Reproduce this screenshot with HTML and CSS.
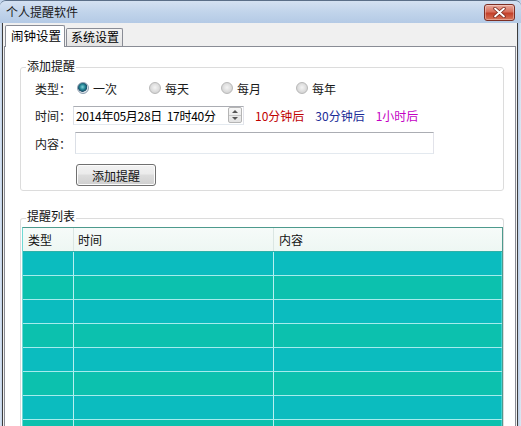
FILE: index.html
```html
<!DOCTYPE html>
<html lang="zh">
<head>
<meta charset="utf-8">
<title>个人提醒软件</title>
<link rel="stylesheet" href="styles.css">
</head>
<body>
<div class="window">
  <div class="titlebar">
    <span class="title">个人提醒软件</span>
    <span class="close"><svg width="13" height="11" viewBox="0 0 13 11"><path d="M2 1.5 L11 9.5 M11 1.5 L2 9.5" stroke="#7a2a1e" stroke-width="3.4" stroke-linecap="round"/><path d="M2 1.5 L11 9.5 M11 1.5 L2 9.5" stroke="#ffffff" stroke-width="1.8" stroke-linecap="round"/></svg></span>
  </div>
  <div class="client">
    <div class="tabs">
      <div class="tab active">闹钟设置</div>
      <div class="tab">系统设置</div>
    </div>
    <div class="panel">
      <div class="group add">
        <span class="legend">添加提醒</span>
        <div class="row r1">
          <span class="label">类型：</span>
          <div class="radios">
            <span class="opt"><span class="radio checked"></span>一次</span>
            <span class="opt"><span class="radio"></span>每天</span>
            <span class="opt"><span class="radio"></span>每月</span>
            <span class="opt"><span class="radio"></span>每年</span>
          </div>
        </div>
        <div class="row r2">
          <span class="label">时间：</span>
          <div class="datebox">
            <span class="datetext">2014年05月28日&nbsp; 17时40分</span>
            <span class="spin"><span class="up"></span><span class="down"></span></span>
          </div>
          <span class="quick red">10分钟后</span>
          <span class="quick navy">30分钟后</span>
          <span class="quick pink">1小时后</span>
        </div>
        <div class="row r3">
          <span class="label">内容：</span>
          <div class="textbox"></div>
        </div>
        <div class="row r4">
          <button class="btn">添加提醒</button>
        </div>
      </div>
      <div class="group list">
        <span class="legend">提醒列表</span>
        <div class="table">
          <div class="thead">
            <span class="th c1">类型</span>
            <span class="th c2">时间</span>
            <span class="th c3">内容</span>
          </div>
          <div class="trow a"><span class="td"></span><span class="td"></span><span class="td"></span></div>
          <div class="trow b"><span class="td"></span><span class="td"></span><span class="td"></span></div>
          <div class="trow a"><span class="td"></span><span class="td"></span><span class="td"></span></div>
          <div class="trow b"><span class="td"></span><span class="td"></span><span class="td"></span></div>
          <div class="trow a"><span class="td"></span><span class="td"></span><span class="td"></span></div>
          <div class="trow b"><span class="td"></span><span class="td"></span><span class="td"></span></div>
          <div class="trow a"><span class="td"></span><span class="td"></span><span class="td"></span></div>
          <div class="trow b"><span class="td"></span><span class="td"></span><span class="td"></span></div>
        </div>
      </div>
    </div>
  </div>
</div>
</body>
</html>
```
FILE: styles.css
```css
* { box-sizing: border-box; }
html, body { margin: 0; padding: 0; background: #c2d5ec; }
body {
  font-family: "Noto Sans CJK SC", "Liberation Sans", sans-serif;
  font-size: 12px;
  color: #000;
}
.window {
  width: 521px;
  height: 426px;
  display: flex;
  flex-direction: column;
  overflow: hidden;
  background: linear-gradient(90deg, #dfe8f3 0, #b9cde6 2px, #b9cde6 518px, #dfe8f3 521px);
  border-radius: 6px 6px 0 0;
  border-top: 1px solid #5b6f88;
}
.titlebar {
  flex: none;
  height: 22px;
  display: flex;
  align-items: center;
  padding: 0 6px 0 6px;
  background: linear-gradient(#d4e1f1 0, #c1d4eb 50%, #b4cae5 100%);
  border-radius: 6px 6px 0 0;
}
.title { line-height: 16px; color: #1a1a1a; }
.close {
  margin-left: auto;
  width: 31px;
  height: 17px;
  margin-top: 1px;
  display: flex;
  align-items: center;
  justify-content: center;
  border: 1px solid #7c2e24;
  border-radius: 3px;
  background: linear-gradient(#eaa99c 0, #d7705d 45%, #c3402a 55%, #d8755a 100%);
  box-shadow: inset 0 0 0 1px rgba(255,255,255,0.35);
}
.client {
  flex: 1;
  margin: 0 3px 0 2px;
  border-left: 1px solid #3d3d3d;
  border-right: 1px solid #3d3d3d;
  background: #f0f0f0;
  display: flex;
  flex-direction: column;
  min-height: 0;
}
.tabs {
  flex: none;
  height: 23px;
  display: flex;
  align-items: flex-end;
  padding-left: 2px;
  position: relative;
  z-index: 1;
}
.tab {
  height: 18px;
  width: 57px;
  margin-left: 1px;
  border: 1px solid #898c95;
  border-bottom: none;
  border-radius: 2px 2px 0 0;
  background: linear-gradient(#f3f3f3, #e4e4e4);
  line-height: 16px;
  padding-left: 4px;
  white-space: nowrap;
}
.tab.active {
  margin-left: 0;
  width: 60px;
  height: 22px;
  margin-bottom: -1px;
  background: #fff;
  padding-left: 5px;
  line-height: 19px;
  font-size: 12.5px;
}
.panel {
  flex: 1;
  min-height: 0;
  margin: 0 1px;
  background: #fff;
  border: 1px solid #898c95;
  border-bottom: none;
  display: flex;
  flex-direction: column;
  overflow: hidden;
}
.group {
  position: relative;
  width: 484px;
  margin-left: 15px;
  border: 1px solid #dcdcdc;
  border-radius: 3px;
  box-shadow: inset 1px 1px 0 #fff;
}
.legend {
  position: absolute;
  top: -10px;
  left: 5px;
  padding: 0 1px;
  background: #fff;
  line-height: 16px;
  color: #111;
}
.group.add {
  margin-top: 20px;
  height: 124px;
  padding: 9px 0 0 14px;
  flex: none;
}
.row {
  display: flex;
  align-items: center;
  height: 22px;
}
.r2 { margin-top: 5px; }
.r3 { margin-top: 6px; }
.r4 { margin-top: 10px; }
.label {
  width: 38px;
  flex: none;
  color: #1a1a1a;
}
.radios {
  display: flex;
  margin-left: 4px;
}
.opt {
  display: flex;
  align-items: center;
  width: 72px;
  color: #1a1a1a;
}
.opt:nth-child(3) { width: 75px; }
.radio {
  width: 12px;
  height: 12px;
  border-radius: 50%;
  border: 1px solid #b8b8b8;
  background: radial-gradient(circle at 50% 45%, #f4f4f4 0, #dadada 60%, #c8c8c8 100%);
  margin-right: 4px;
  flex: none;
}
.radio.checked {
  border-color: #8e9fb0;
  background: radial-gradient(circle at 45% 40%, #7fd3da 0, #1f7f8f 35%, #1c4d68 55%, #dfe6ec 62%, #c9d3dc 100%);
}
.datebox {
  width: 171px;
  height: 19px;
  border: 1px solid #abadb3;
  border-color: #abadb3 #e2e3ea #e3e9ef #dbdfe6;
  display: flex;
  align-items: center;
  padding-left: 2px;
}
.datetext {
  flex: 1;
  white-space: nowrap;
  letter-spacing: -0.3px;
}
.spin {
  width: 14px;
  height: 16px;
  margin-right: 1px;
  display: flex;
  flex-direction: column;
  border: 1px solid #b5b5b5;
  border-radius: 2px;
  background: linear-gradient(#f6f6f6, #e3e3e3);
}
.spin span {
  flex: 1;
  display: flex;
  align-items: center;
  justify-content: center;
}
.spin .up { border-bottom: 1px solid #c7c7c7; }
.spin .up::after {
  content: "";
  border-left: 3px solid transparent;
  border-right: 3px solid transparent;
  border-bottom: 3px solid #555;
}
.spin .down::after {
  content: "";
  border-left: 3px solid transparent;
  border-right: 3px solid transparent;
  border-top: 3px solid #555;
}
.quick { white-space: nowrap; }
.red { color: #c00000; margin-left: 11px; }
.navy { color: #1a2a96; margin-left: 11px; }
.pink { color: #c400c4; margin-left: 11px; }
.textbox {
  width: 359px;
  height: 22px;
  margin-left: 2px;
  border: 1px solid #abadb3;
  border-color: #abadb3 #e2e3ea #e3e9ef #dbdfe6;
}
.btn {
  margin-left: 41px;
  width: 80px;
  height: 22px;
  padding: 0;
  font-family: inherit;
  font-size: 12px;
  color: #111;
  border: 1px solid #707070;
  border-radius: 3px;
  background: linear-gradient(#f2f2f2 0, #ebebeb 45%, #dddddd 50%, #cfcfcf 100%);
  box-shadow: inset 0 0 0 1px #fcfcfc;
}
.group.list {
  margin-top: 27px;
  flex: 1;
  border-bottom: none;
  padding: 8px 0 0 1px;
}
.group.list .legend { top: -11px; }
.table {
  width: 481px;
  border: 1px solid #4d9a8d;
  border-bottom: none;
  border-left-color: #6fd9d4;
  background: #0cbcbf;
}
.thead {
  display: grid;
  grid-template-columns: 51px 200px 1fr;
  height: 24px;
  background: linear-gradient(#f6fbf9, #eef7f3);
  border-bottom: 1px solid #2fb0a8;
}
.th {
  line-height: 23px;
  padding-left: 5px;
  border-right: 1px solid #dbe6e3;
  color: #111;
}
.th.c2 { padding-left: 4px; }
.th.c3 { padding-left: 5px; border-right: none; }
.trow {
  display: grid;
  grid-template-columns: 51px 200px 1fr;
  height: 24px;
  border-bottom: 1px solid #a6ecec;
}
.trow.a { background: #0bbcbf; }
.trow.b { background: #0cc1ae; }
.td { border-right: 1px solid #b8f0f0; }
.td:last-child { border-right: 1px solid #3fd2d2; }
```
